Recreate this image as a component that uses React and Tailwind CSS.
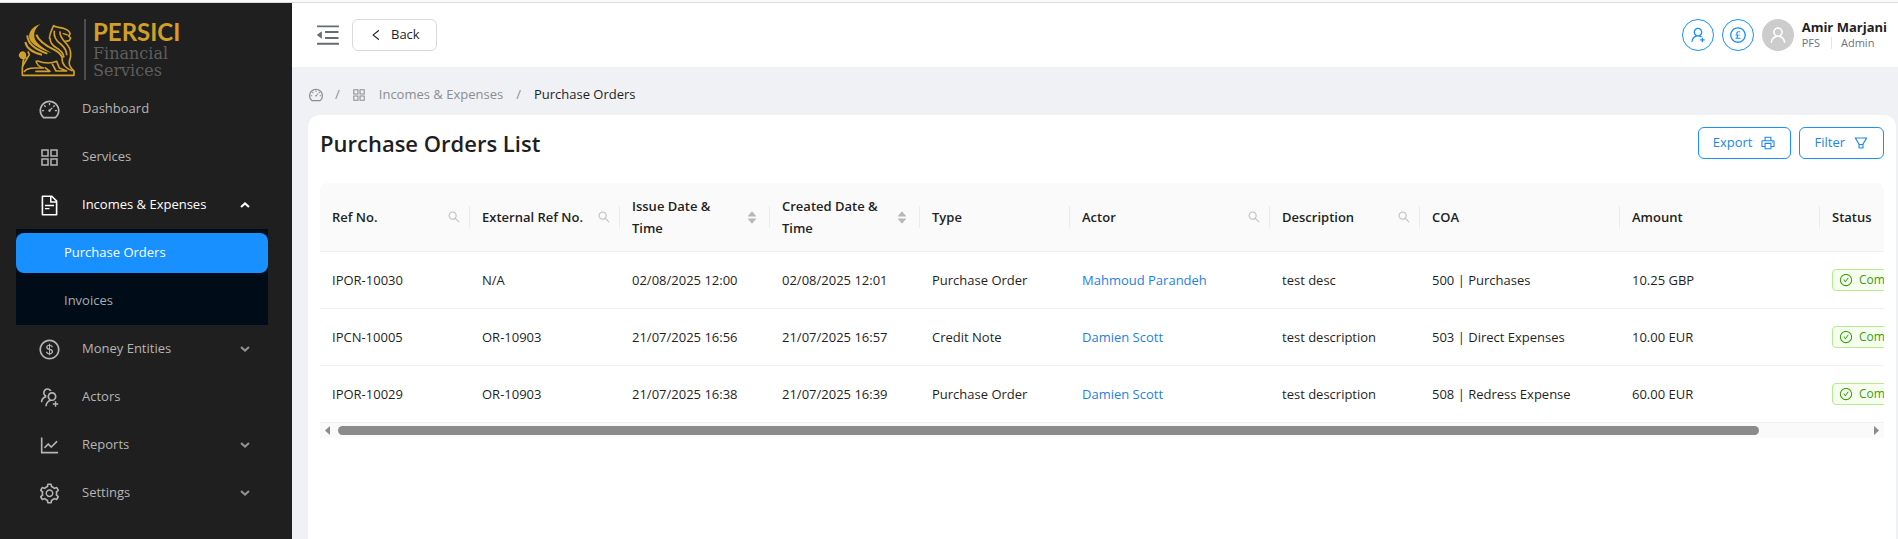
import {
  AiOutlineDashboard, AiOutlineAppstore, AiOutlineFileText, AiOutlineDollar, AiOutlineUsergroupAdd,
  AiOutlineLineChart, AiOutlineSetting, AiOutlinePrinter, AiOutlineFilter, AiOutlineUserAdd,
  AiOutlinePound, AiOutlineUser, AiOutlineSearch, AiOutlineCheckCircle, AiOutlineMenuFold,
  AiOutlineLeft, AiFillCaretUp, AiFillCaretDown,
} from "react-icons/ai";

function Griffin() {
  return (
    <svg viewBox="54 69 174 162" className="h-[54px] w-[58px]" fill="none" stroke="#d19f2a" strokeWidth="5" strokeLinejoin="round" aria-hidden="true">
      <path d="M121 72C96 80 84 98 88 116C94 132 120 148 156 160C128 142 106 130 103 110C101 95 108 82 121 72Z" fill="#d19f2a" stroke="none" />
      <path d="M82 106C82 130 104 148 142 161" strokeWidth="6" />
      <path d="M76 126C80 146 100 158 126 164" strokeWidth="6" />
      <path d="M109 104C116 124 142 140 166 151C178 157 184 164 188 176" strokeWidth="6" />
      <path d="M148 116C149 98 155 90 161 77C168 83 184 82 194 86C204 90 210 96 210 102L206 108L212 114L208 122L196 124" />
      <path d="M150 114C150 128 156 136 170 144C184 152 190 160 192 172" />
      <path d="M163 92C160 110 168 122 182 132C194 142 200 152 200 166" />
      <path d="M180 94C178 112 192 122 202 134C215 150 214 168 208 184C206 194 210 202 222 213V226H67V204C70 192 66 184 74 172" />
      <path d="M188 100L203 105" strokeWidth="4" />
      <path d="M80 172C64 180 54 168 62 159C70 153 80 160 74 172" fill="#d19f2a" />
      <path d="M84 154L88 164L68 198M72 216C78 206 92 204 104 204H130C118 200 110 196 108 182" />
      <path d="M106 214H150L134 202M110 182C132 190 152 192 170 184L178 204L200 213H168L156 190M186 176C186 192 194 204 218 213" />
    </svg>
  );
}

function Chevron({ up }) {
  return (
    <svg viewBox="0 0 10 6" className="h-[6px] w-[10px]" fill="none" stroke="currentColor" strokeWidth="2" aria-hidden="true">
      <path d={up ? "M1 5L5 1.4L9 5" : "M1 1L5 4.6L9 1"} />
    </svg>
  );
}

function NavItem({ icon: Icon, label, arrow, open }) {
  return (
    <a href="#" className={"flex h-10 items-center pl-[22px] pr-[18px] " + (open ? "text-white" : "text-[#b5b5b5]")}>
      <Icon size={23} />
      <span className="ml-[21px] flex-1">{label}</span>
      {arrow && <span className={open ? "text-white" : "text-[#929292]"}><Chevron up={open} /></span>}
    </a>
  );
}

function Sidebar() {
  return (
    <aside className="w-[292px] shrink-0 bg-[#1f1f1f] pl-4 pr-6">
      <div className="flex h-[82px] items-start pt-4">
        <div className="ml-[2px] mt-1"><Griffin /></div>
        <div className="ml-2 h-[61px] w-[2px] bg-[#4d4d4d]" />
        <div className="ml-[7px] text-[#5e5e5e]">
          <div className="mt-px font-['Lato',sans-serif] text-[24px] font-bold leading-6 text-[#d19f2a]">PERSICI</div>
          <div className="mt-px font-['DejaVu_Serif',serif] text-[16px] leading-[17px]">Financial<br />Services</div>
        </div>
      </div>
      <nav className="flex flex-col gap-2 pt-1">
        <NavItem icon={AiOutlineDashboard} label="Dashboard" />
        <NavItem icon={AiOutlineAppstore} label="Services" />
        <div>
          <NavItem icon={AiOutlineFileText} label="Incomes & Expenses" arrow open />
          <div className="mt-1 flex flex-col gap-2 bg-[#000c17] py-1">
            <a href="#" className="flex h-10 items-center rounded-lg bg-[#1890ff] pl-12 text-white">Purchase Orders</a>
            <a href="#" className="flex h-10 items-center pl-12 text-[#a6adb4]">Invoices</a>
          </div>
        </div>
        <div className="-mt-1 flex flex-col gap-2">
          <NavItem icon={AiOutlineDollar} label="Money Entities" arrow />
          <NavItem icon={AiOutlineUsergroupAdd} label="Actors" />
          <NavItem icon={AiOutlineLineChart} label="Reports" arrow />
          <NavItem icon={AiOutlineSetting} label="Settings" arrow />
        </div>
      </nav>
    </aside>
  );
}

function Header() {
  return (
    <header className="flex h-16 items-center bg-white pl-[22px] pr-[11px]">
      <button aria-label="Collapse menu" className="text-[#666c72]"><AiOutlineMenuFold size={28} /></button>
      <button className="ml-[10px] flex h-8 items-center gap-2 rounded-md border border-[#d9d9d9] px-4">
        <AiOutlineLeft size={14} />Back
      </button>
      <div className="ml-auto flex items-center gap-2">
        <button aria-label="Add user" className="flex size-8 items-center justify-center rounded-full border border-[#1890ff] text-[#1890ff]"><AiOutlineUserAdd size={18} /></button>
        <button aria-label="Currency" className="flex size-8 items-center justify-center rounded-full border border-[#1890ff] text-[#1890ff]"><AiOutlinePound size={18} /></button>
        <span className="flex size-8 items-center justify-center rounded-full bg-[#cccccc] text-white"><AiOutlineUser size={20} /></span>
        <div className="flex flex-col">
          <span className="font-bold leading-4">Amir Marjani</span>
          <span className="flex items-center text-[11px] leading-4 text-[#6b7280]">
            PFS<i className="ml-[11px] mr-[9px] h-3 w-px bg-[#e5e5e5]" />Admin
          </span>
        </div>
      </div>
    </header>
  );
}

const columns = [
  { label: "Ref No.", width: "w-[150px]", tool: "search" },
  { label: "External Ref No.", width: "w-[150px]", tool: "search" },
  { label: "Issue Date & Time", width: "w-[150px]", tool: "sort" },
  { label: "Created Date & Time", width: "w-[150px]", tool: "sort" },
  { label: "Type", width: "w-[150px]" },
  { label: "Actor", width: "w-[200px]", tool: "search" },
  { label: "Description", width: "w-[150px]", tool: "search" },
  { label: "COA", width: "w-[200px]" },
  { label: "Amount", width: "w-[200px]" },
  { label: "Status", width: "w-[183px]" },
];

const rows = [
  ["IPOR-10030", "N/A", "02/08/2025 12:00", "02/08/2025 12:01", "Purchase Order", "Mahmoud Parandeh", "test desc", "500 | Purchases", "10.25 GBP"],
  ["IPCN-10005", "OR-10903", "21/07/2025 16:56", "21/07/2025 16:57", "Credit Note", "Damien Scott", "test description", "503 | Direct Expenses", "10.00 EUR"],
  ["IPOR-10029", "OR-10903", "21/07/2025 16:38", "21/07/2025 16:39", "Purchase Order", "Damien Scott", "test description", "508 | Redress Expense", "60.00 EUR"],
];

function Tool({ kind, label }) {
  if (kind === "search")
    return <button aria-label={"Search " + label} className="text-[#bfbfbf]"><AiOutlineSearch size={14} /></button>;
  if (kind === "sort")
    return (
      <button aria-label={"Sort by " + label} className="flex flex-col text-[#b8b8b8]">
        <AiFillCaretUp size={12} className="-mb-[5px]" />
        <AiFillCaretDown size={12} />
      </button>
    );
  return null;
}

function OrdersTable() {
  return (
    <div className="mt-6">
      <div className="overflow-x-auto rounded-t-lg [scrollbar-width:none]">
        <table className="w-[1683px] table-fixed border-separate border-spacing-0">
          <thead>
            <tr>
              {columns.map((c, i) => (
                <th key={c.label} className={c.width + " border-b border-[#f0f0f0] bg-[#fafafa] p-0 text-left font-semibold"}>
                  <div className="flex h-[68px] items-center">
                    <div className={"flex flex-1 items-center justify-between pl-3 leading-[22px] " + (c.tool === "sort" ? "pr-[11px]" : "pr-2")}>
                      <span className={c.tool === "sort" ? "w-[104px]" : "whitespace-nowrap"}>{c.label}</span>
                      <Tool kind={c.tool} label={c.label} />
                    </div>
                    {i < columns.length - 1 && <i className="h-[22px] w-px bg-[#ebebeb]" />}
                  </div>
                </th>
              ))}
            </tr>
          </thead>
          <tbody>
            {rows.map((r) => (
              <tr key={r[0]}>
                {r.map((v, i) => (
                  <td key={i} className="border-b border-[#f0f0f0] px-3 py-4 leading-6">
                    {i === 5 ? <a href="#" className="text-[#1f7fe5]">{v}</a> : v}
                  </td>
                ))}
                <td className="border-b border-[#f0f0f0] px-3 py-0">
                  <span className="inline-flex h-[22px] items-center gap-[6px] rounded border border-[#b7eb8f] bg-[#f6ffed] px-[6px] align-middle text-xs text-[#389e0d]">
                    <AiOutlineCheckCircle size={14} />Completed
                  </span>
                </td>
              </tr>
            ))}
          </tbody>
        </table>
      </div>
      <div className="flex h-[15px] items-center bg-[#fafafa] px-[5px] text-[#8b8b8b]">
        <svg viewBox="0 0 5 9" className="h-[9px] w-[5px]" fill="currentColor" aria-hidden="true"><path d="M5 0V9L0 4.5Z" /></svg>
        <div className="mx-2 flex-1"><div className="h-[9px] w-[93%] rounded-full bg-[#8b8b8b]" /></div>
        <svg viewBox="0 0 5 9" className="h-[9px] w-[5px]" fill="currentColor" aria-hidden="true"><path d="M0 0V9L5 4.5Z" /></svg>
      </div>
    </div>
  );
}

export default function App() {
  return (
    <div className="flex min-h-screen flex-col bg-[#eff1f5] font-['Open_Sans','Noto_Sans',sans-serif] text-[13px] text-[#1f1f1f]">
      <div className="h-[3px] border-b border-[#dcdde0] bg-[#fafafa]" />
      <div className="flex flex-1">
        <Sidebar />
        <div className="flex min-w-0 flex-1 flex-col">
          <Header />
          <nav aria-label="Breadcrumb" className="flex h-12 items-center pl-4 pt-2 text-[#8b8d90]">
            <a href="#" aria-label="Dashboard"><AiOutlineDashboard size={16} /></a>
            <span className="mx-[11px]">/</span>
            <a href="#" className="flex items-center gap-3"><AiOutlineAppstore size={16} />Incomes &amp; Expenses</a>
            <span className="mx-[13px]">/</span>
            <span className="text-[#1f1f1f]">Purchase Orders</span>
          </nav>
          <main className="ml-4 mr-[2px] flex-1 rounded-t-xl bg-white px-3 pt-3">
            <div className="flex h-8 items-center gap-2">
              <h1 className="mr-auto text-[22px] font-semibold">Purchase Orders List</h1>
              <button className="flex h-8 items-center gap-2 rounded-md border border-[#1890ff] px-[14px] text-[#1a85ee]">Export<AiOutlinePrinter size={16} /></button>
              <button className="flex h-8 items-center gap-2 rounded-md border border-[#1890ff] px-[14px] text-[#1a85ee]">Filter<AiOutlineFilter size={16} /></button>
            </div>
            <OrdersTable />
          </main>
        </div>
      </div>
    </div>
  );
}
